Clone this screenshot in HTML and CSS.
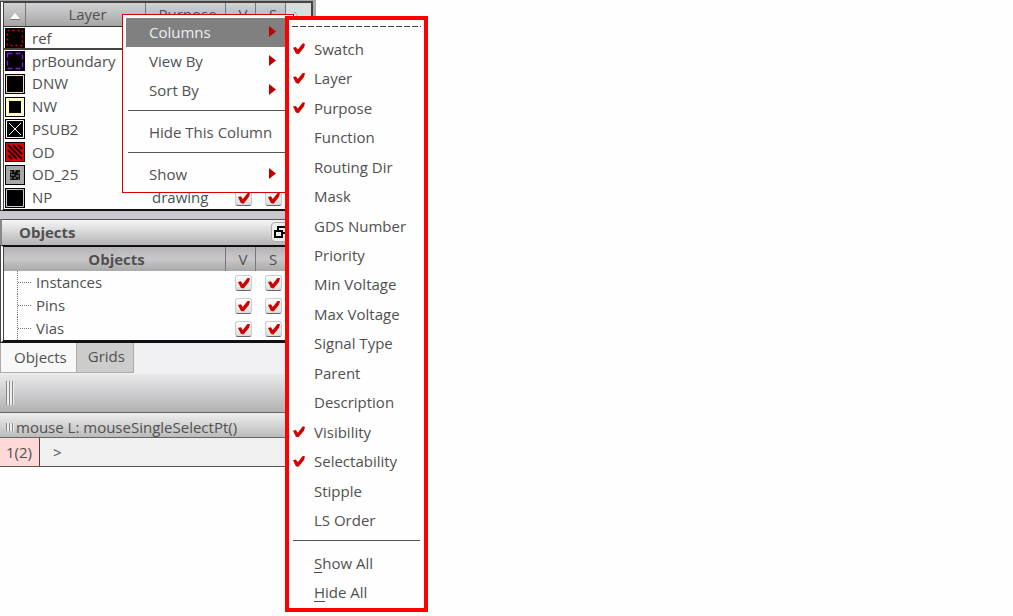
FILE: index.html
```html
<!DOCTYPE html>
<html lang="en">
<head>
<meta charset="utf-8">
<title>Layer palette</title>
<link rel="stylesheet" href="styles.css">
</head>
<body>
<main class="app">
  <section class="layers">
    <table class="grid layer-grid">
      <colgroup><col class="c-swatch"><col class="c-layer"><col class="c-purpose"><col class="c-flag"><col class="c-flag"><col></colgroup>
      <thead>
        <tr>
          <th><svg class="up" width="10" height="7" viewBox="0 0 10 7"><path d="M5 0L10 6H0Z" fill="#fff"/><path d="M0 6.500h10" stroke="#777"/></svg></th>
          <th>Layer</th><th>Purpose</th><th class="flag">V</th><th class="flag">S</th>
          <th class="scroll"><svg class="up" width="10" height="9" viewBox="0 0 10 9"><path d="M5 1L9 8H1Z" fill="#fff" stroke="#aaa"/></svg></th>
        </tr>
      </thead>
      <tbody>
        <tr class="current"><td><svg class="swatch" viewBox="0 0 20 20"><path d="M0 0h20v20H0z"/><path d="M2.500 2.500h15v15h-15z" fill="none" stroke="#f00000" stroke-width="1.300" stroke-dasharray="2 3"/></svg></td><td>ref</td><td></td><td></td><td></td><td></td></tr>
        <tr><td><svg class="swatch" viewBox="0 0 20 20"><path d="M0 0h20v20H0z"/><path d="M2.500 2.500h15v15h-15z" fill="none" stroke="#8a10f0" stroke-width="1.300" stroke-dasharray="5 3"/></svg></td><td>prBoundary</td><td></td><td></td><td></td><td></td></tr>
        <tr><td><svg class="swatch" viewBox="0 0 20 20"><path d="M0 0h20v20H0z"/><path d="M1.500 1.500h17v17h-17z" fill="none" stroke="#f0d8b8"/></svg></td><td>DNW</td><td></td><td></td><td></td><td></td></tr>
        <tr><td><svg class="swatch" viewBox="0 0 20 20"><path d="M0 0h20v20H0z"/><path d="M1 1h18v18H1z" fill="#ffffc4"/><path d="M4 4h12v12H4z"/></svg></td><td>NW</td><td></td><td></td><td></td><td></td></tr>
        <tr><td><svg class="swatch" viewBox="0 0 20 20"><path d="M0 0h20v20H0z"/><path d="M1.500 1.500h17v17h-17zM4 4l12 12M16 4L4 16" fill="none" stroke="#fff"/></svg></td><td>PSUB2</td><td></td><td></td><td></td><td></td></tr>
        <tr><td><svg class="swatch" viewBox="0 0 20 20"><path d="M0 0h20v20H0z"/><path d="M1 1h18v18H1z" fill="#e80000"/><path d="M3 13l4 4M3 8l9 9M3 3l14 14M8 3l9 9M13 3l4 4" stroke="#180000" stroke-width="2.200"/></svg></td><td>OD</td><td></td><td></td><td></td><td></td></tr>
        <tr><td><svg class="swatch" viewBox="0 0 20 20"><path d="M0 0h20v20H0z"/><path d="M1 1h18v18H1z" fill="#a8a8a8"/><path d="M5 5h10v10H5z" fill="#111"/><path d="M5 7h2m2-1h2m2 2h2M6 10h3m2 1h3M5 13h2m2 0h2m2 1h1" stroke="#999"/></svg></td><td>OD_25</td><td></td><td></td><td></td><td></td></tr>
        <tr><td><svg class="swatch" viewBox="0 0 20 20"><path d="M0 0h20v20H0z"/><path d="M1.500 1.500h17v17h-17z" fill="none" stroke="#c8c8d4"/></svg></td><td>NP</td><td>drawing</td><td class="flag"><input class="tick" type="checkbox" aria-label="NP visible" checked></td><td class="flag"><input class="tick" type="checkbox" aria-label="NP selectable" checked></td><td></td></tr>
      </tbody>
    </table>
  </section>

  <header class="dock-title">
    <h2>Objects</h2>
    <button class="float" aria-label="Float panel"><svg width="16" height="16" viewBox="0 0 16 16" fill="none" stroke="#000" stroke-width="2"><path d="M5 6V3h8v6h-4M2 7h7v6H2z"/></svg></button>
  </header>

  <section class="objects">
    <table class="grid object-grid">
      <colgroup><col class="c-object"><col class="c-flag"><col class="c-flag"><col></colgroup>
      <thead><tr><th class="strong">Objects</th><th class="flag">V</th><th class="flag">S</th><th></th></tr></thead>
      <tbody>
        <tr><td class="node">Instances</td><td class="flag"><input class="tick" type="checkbox" aria-label="Instances visible" checked></td><td class="flag"><input class="tick" type="checkbox" aria-label="Instances selectable" checked></td><td></td></tr>
        <tr><td class="node">Pins</td><td class="flag"><input class="tick" type="checkbox" aria-label="Pins visible" checked></td><td class="flag"><input class="tick" type="checkbox" aria-label="Pins selectable" checked></td><td></td></tr>
        <tr><td class="node">Vias</td><td class="flag"><input class="tick" type="checkbox" aria-label="Vias visible" checked></td><td class="flag"><input class="tick" type="checkbox" aria-label="Vias selectable" checked></td><td></td></tr>
      </tbody>
    </table>
  </section>

  <nav class="tabs"><button class="tab active">Objects</button><button class="tab">Grids</button></nav>
  <div class="toolbar"><i class="grip"></i></div>
  <div class="status"><i class="grip small"></i>mouse L: mouseSingleSelectPt()</div>
  <div class="prompt"><span class="count">1(2)</span><span class="caret">&gt;</span></div>

  <div class="menu">
    <button class="item selected">Columns<i class="arrow"></i></button>
    <button class="item">View By<i class="arrow"></i></button>
    <button class="item">Sort By<i class="arrow"></i></button>
    <hr class="rule">
    <button class="item">Hide This Column</button>
    <hr class="rule">
    <button class="item">Show<i class="arrow"></i></button>
  </div>

  <div class="submenu">
    <div class="tear"></div>
    <div class="options">
      <label class="option"><input type="checkbox" checked>Swatch</label>
      <label class="option"><input type="checkbox" checked>Layer</label>
      <label class="option"><input type="checkbox" checked>Purpose</label>
      <label class="option"><input type="checkbox">Function</label>
      <label class="option"><input type="checkbox">Routing Dir</label>
      <label class="option"><input type="checkbox">Mask</label>
      <label class="option"><input type="checkbox">GDS Number</label>
      <label class="option"><input type="checkbox">Priority</label>
      <label class="option"><input type="checkbox">Min Voltage</label>
      <label class="option"><input type="checkbox">Max Voltage</label>
      <label class="option"><input type="checkbox">Signal Type</label>
      <label class="option"><input type="checkbox">Parent</label>
      <label class="option"><input type="checkbox">Description</label>
      <label class="option"><input type="checkbox" checked>Visibility</label>
      <label class="option"><input type="checkbox" checked>Selectability</label>
      <label class="option"><input type="checkbox">Stipple</label>
      <label class="option"><input type="checkbox">LS Order</label>
    </div>
    <hr class="rule">
    <button class="item"><u>S</u>how All</button>
    <button class="item"><u>H</u>ide All</button>
  </div>
</main>
</body>
</html>
```
FILE: styles.css
```css
* { box-sizing: border-box; }
body {
  min-height: 100vh;
  margin: 0;
  background: #fefefe;
  color: #505050;
  font: 15px/20px "Open Sans", "Noto Sans", sans-serif;
}
button { font: inherit; color: inherit; border: 0; background: none; padding: 0; }
.app { position: relative; width: 316px; }

.layers {
  padding-right: 3px;
  background: #a8abab;
  border-top: 1px solid #a0a4a4;
}
.grid { width: 100%; border-collapse: separate; border-spacing: 0; table-layout: fixed; background: #fefefe; }
.layer-grid {
  height: 210px;
  border: 2px solid #444;
  border-left: 4px double #444;
  border-bottom: 2px solid #111;
}
.c-swatch { width: 22px; }
.c-layer { width: 120px; }
.c-purpose { width: 80px; }
.c-flag { width: 30px; }
.c-object { width: 222px; }
.grid th {
  height: 24px;
  padding: 0 0 0 4px;
  font-weight: 400;
  text-align: center;
  background: linear-gradient(#b4b2b4, #c9c7c9 50%, #a9aaa9);
  border-right: 1px solid #777;
}
.layer-grid th { padding-bottom: 2px; border-bottom: 1px solid #333; background: linear-gradient(#d2d2d2, #b9b7ba 60%, #a4a5a4); }
.layer-grid th:first-child { padding-left: 0; }
.grid th:last-child { border-right: 0; }
.layer-grid .scroll { background: #d8dcda; text-align: left; }
.grid .strong { font-weight: 700; }
.grid td { padding: 0; text-align: center; line-height: 20px; }
.grid .flag { padding-left: 5px; }
.layer-grid td:nth-child(1) { text-align: left; padding-left: 1px; }
.layer-grid td:nth-child(2),
.layer-grid td:nth-child(3) { text-align: left; padding: 0 0 1px 6px; }
.layer-grid .current td { box-shadow: inset 0 -2px #444; }
.swatch { display: block; width: 20px; height: 20px; }

.tick {
  appearance: none;
  display: block;
  width: 17px;
  height: 16px;
  margin: 0 auto;
  padding: 2px;
  background: linear-gradient(#fff, #ddd);
  border: 1px solid #ccc;
  border-bottom: 1px solid #666;
  border-radius: 3px;
}
.tick::before, .option input:checked::before {
  content: "";
  display: block;
  width: 12px;
  height: 11px;
  background: #d00000;
  clip-path: polygon(0 40%, 24% 34%, 40% 58%, 82% 0, 100% 6%, 92% 38%, 46% 100%, 24% 94%);
}

.dock-title {
  display: flex;
  align-items: center;
  justify-content: space-between;
  height: 26px;
  margin-top: 8px;
  padding: 0 26px 2px 17px;
  border-top: 1px solid #555;
  border-left: 2px solid #888;
  background: linear-gradient(#f6f6f6, #b4b4b4);
  box-shadow: 0 -8px #cbc9cf;
}
.dock-title h2 { margin: 0; font-size: 15px; line-height: 20px; }
.float { display: flex; padding: 1px 0 1px 1px; border: 1px solid #aaa; border-radius: 4px; background: #eee; }
.objects {
  border: 2px solid #111;
  border-bottom-width: 3px;
  border-left: 4px double #444;
}
.object-grid tbody td { height: 23px; }
.object-grid .node {
  padding-left: 13px;
  text-align: left;
  line-height: 22px;
}
.node::before {
  content: "";
  display: inline-block;
  width: 14px;
  height: 23px;
  margin-right: 4px;
  vertical-align: top;
  border-left: 1px dotted #777;
  background: repeating-linear-gradient(90deg, #777 0 1px, transparent 1px 2px) 0 11px / 100% 1px no-repeat;
}

.tabs { display: flex; align-items: flex-start; height: 31px; background: #f0eff1; }
.tab { height: 30px; border: 1px solid #aaa; border-top: 0; }
.tab.active { padding: 0 9px 2px 13px; background: #f8f8f8; border-right: 0; }
.tab:not(.active) { padding: 0 8px 4px 11px; background: #ccc; }
.toolbar, .status { display: flex; align-items: center; border-bottom: 1px solid #666; }
.toolbar { height: 39px; padding-left: 6px; background: linear-gradient(#e9e9e9, #c8c7c9 60%, #b0b2b0); }
.status { height: 25px; padding: 3px 0 0 6px; background: linear-gradient(#eee, #bbb); }
.grip { width: 8px; height: 24px; background: repeating-linear-gradient(90deg, #888 0 1px, #eee 1px 3px); }
.grip.small { height: 8px; margin-right: 2px; }
.prompt { display: flex; align-items: stretch; height: 29px; line-height: 28px; background: #f1f0f1; border-bottom: 1px solid #555; }
.count { padding: 0 7px 0 6px; background: #ffd8d8; border-right: 1px solid #444; }
.caret { padding-left: 13px; }

.menu, .submenu { position: absolute; background: #fefefe; }
.menu { left: 122px; top: 14px; width: 172px; padding: 3px; border: 1px solid #d80000; }
.item {
  display: flex;
  align-items: center;
  justify-content: space-between;
  width: 100%;
  height: 29px;
  padding: 0 14px 2px 23px;
  white-space: nowrap;
}
.item.selected { background: #808080; color: #eee; }
.arrow { width: 7px; height: 11px; background: #c00000; clip-path: polygon(0 0, 100% 50%, 0 100%); }
.rule { margin: 5px 2px 7px; border: 0; border-top: 1px solid #555; }
.submenu { left: 285px; top: 16px; width: 143px; padding: 6px 3px 1px; border: 4px solid #f00; }
.tear { height: 8px; background: repeating-linear-gradient(90deg, #444 0 6px, transparent 6px 8px) 0 0 / 100% 1px no-repeat; }
.options { display: grid; grid-auto-rows: 1fr; height: 501px; }
.option { display: flex; align-items: center; }
.option input { appearance: none; width: 12px; height: 11px; margin: 0 9px 0 1px; }
.submenu .rule { margin: 5px 1px 8px; }
.submenu .item { justify-content: flex-start; padding: 0 22px 2px; }
u { text-underline-offset: 3px; }
```
